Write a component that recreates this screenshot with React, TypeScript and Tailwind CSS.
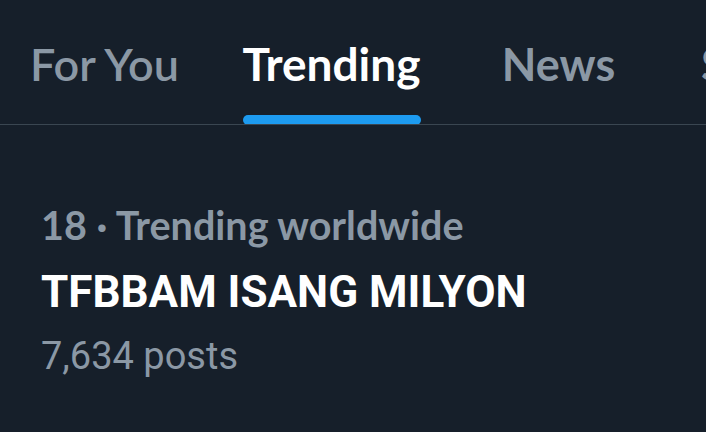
export default function App() {
  return (
    <div className="w-[706px] h-[432px] overflow-hidden bg-[#161f2a]">
      {/* tabs */}
      <div className="relative flex h-[125px] items-start whitespace-nowrap font-['Lato',sans-serif] text-[45px] leading-none">
        <div className="-ml-[9px] w-[227px] shrink-0 pt-[42px] text-center font-semibold text-[#8b98a5]">For You</div>
        <div className="flex w-[227px] shrink-0 flex-col items-center">
          <div className="pt-[41px] text-[46px] font-bold text-white">Trending</div>
          <div className="mt-[28px] h-[10px] w-[178px] rounded-full bg-[#1d9bf0]" />
        </div>
        <div className="w-[227px] shrink-0 pt-[42px] text-center font-bold text-[#8b98a5]">News</div>
        <div className="ml-[29px] shrink-0 pt-[42px] font-bold text-[#8b98a5]">Sports</div>
        <div className="absolute bottom-0 left-0 h-px w-full bg-[#3a4651]" />
      </div>

      {/* trend item */}
      <div className="px-[41px] pt-[80px]">
        <div className="font-['Lato',sans-serif] text-[39.5px] font-bold leading-none text-[#8b98a5]">
          18 · Trending worldwide
        </div>
        <div className="mt-[25px] font-['Roboto',sans-serif] text-[44px] font-bold leading-none text-white">
          TFBBAM ISANG MILYON
        </div>
        <div className="mt-[23px] font-['Roboto',sans-serif] text-[38px] leading-none text-[#8b98a5]">
          7,634 posts
        </div>
      </div>
    </div>
  );
}
